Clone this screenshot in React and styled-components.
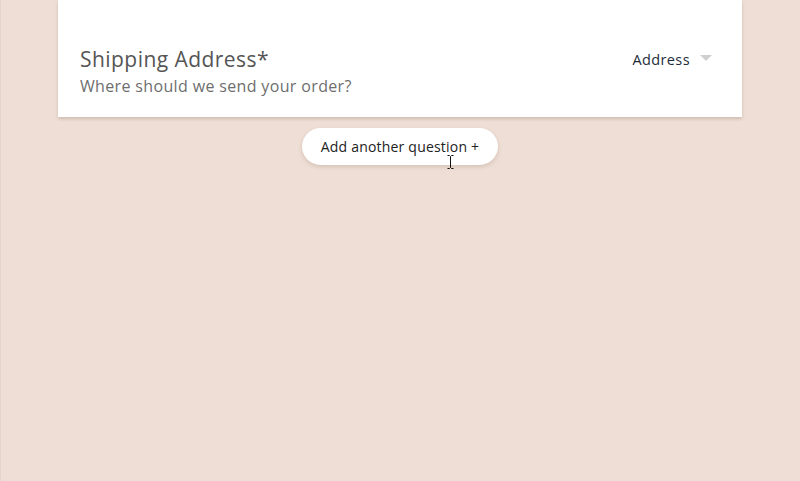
import React from 'react';
import styled, { createGlobalStyle } from 'styled-components';

const GlobalStyle = createGlobalStyle`
  html, body {
    margin: 0;
    padding: 0;
    background: #eeded5;
    font-family: "Open Sans", "Liberation Sans", sans-serif;
  }
`;

const App = () => (
  <>
    <GlobalStyle />
    <Page>
      <QuestionCard>
        <QuestionText>
          <QuestionTitle>Shipping Address*</QuestionTitle>
          <QuestionHint>Where should we send your order?</QuestionHint>
        </QuestionText>
        <TypeSelect>
          <TypeLabel>Address</TypeLabel>
          <Caret />
        </TypeSelect>
      </QuestionCard>
      <AddRow>
        <AddButton>
          Add another question +
          <TextCursor width="7" height="14" viewBox="0 0 7 14">
            <path d="M0.5 0.5h2l1 1 1-1h2M3.5 1.5v11M0.5 13.5h2l1-1 1 1h2" fill="none" stroke="#111" strokeWidth="1" />
          </TextCursor>
        </AddButton>
      </AddRow>
    </Page>
  </>
);

export default App;

// Styles

const Page = styled.div`
  min-height: 481px;
  padding: 0 58px 0 57px;
  border-left: 1px solid #e2d6cf;
  box-sizing: border-box;
`;

const QuestionCard = styled.section`
  height: 117px;
  background: #fff;
  box-shadow: 0 2px 3px rgba(120, 90, 70, 0.25);
  display: flex;
  align-items: flex-end;
  justify-content: space-between;
  padding: 0 30px 20px 22px;
  box-sizing: border-box;
`;

const QuestionText = styled.div`
  display: flex;
  flex-direction: column;
`;

const QuestionTitle = styled.h2`
  margin: 0;
  font-size: 21px;
  font-weight: 400;
  line-height: 28px;
  letter-spacing: 0.45px;
  color: #555;
`;

const QuestionHint = styled.p`
  margin: 3px 0 0;
  font-size: 16px;
  line-height: 21px;
  letter-spacing: 0.35px;
  color: #6e6e6e;
`;

const TypeSelect = styled.div`
  align-self: flex-start;
  margin-top: 50px;
  display: flex;
  align-items: center;
  gap: 10px;
`;

const TypeLabel = styled.span`
  font-size: 14.5px;
  letter-spacing: 0.4px;
  color: #1e2e3e;
`;

const Caret = styled.span`
  width: 0;
  height: 0;
  border-left: 6px solid transparent;
  border-right: 6px solid transparent;
  border-top: 6px solid #cfcfcf;
  margin-top: -4px;
`;

const AddRow = styled.div`
  display: flex;
  justify-content: center;
  padding-top: 11px;
`;

const AddButton = styled.button`
  position: relative;
  height: 37px;
  padding: 0 19px;
  border: none;
  border-radius: 19px;
  background: #fff;
  box-shadow: 0 2px 4px rgba(120, 90, 70, 0.2);
  font-family: "Open Sans", "Liberation Sans", sans-serif;
  font-size: 14px;
  letter-spacing: 0.2px;
  color: #222;
`;

const TextCursor = styled.svg`
  position: absolute;
  left: 145px;
  top: 27px;
`;
